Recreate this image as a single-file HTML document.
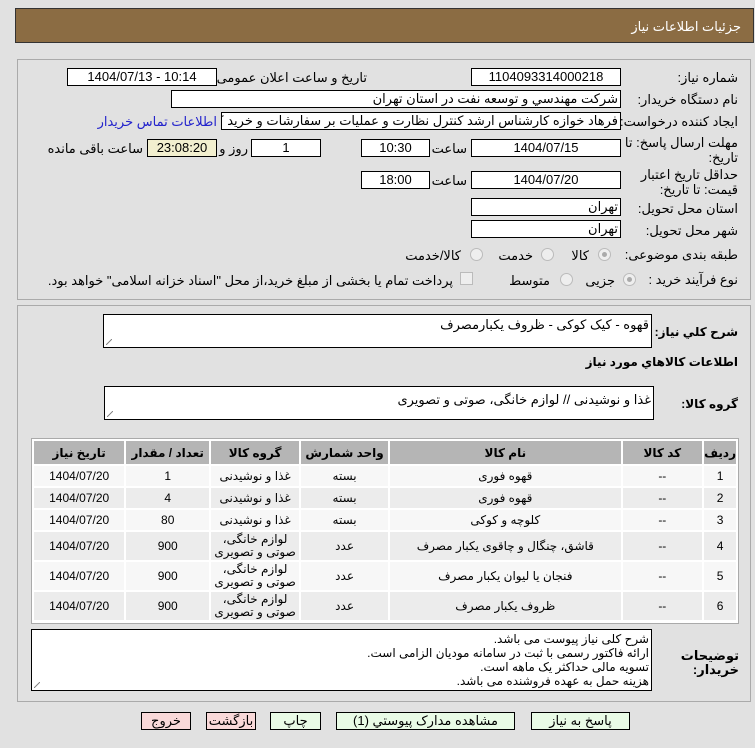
<!DOCTYPE html>
<html><head><meta charset="utf-8">
<style>
*{box-sizing:border-box;margin:0;padding:0}
body{width:755px;height:748px;background:#e1e1e1;font-family:"Liberation Sans","DejaVu Sans",sans-serif;font-size:12px;color:#000;position:relative;overflow:hidden}
.a{position:absolute;white-space:nowrap}
.box{position:absolute;background:#fff;border:1px solid #000;height:18px;line-height:16px;text-align:center;font-size:13px;white-space:nowrap}
.r{direction:rtl;text-align:right}
.lbl{position:absolute;right:17px;direction:rtl;font-size:13px;white-space:nowrap}
.panel{position:absolute;border:1px solid #aaa;background:#e1e1e1}
.radio{position:absolute;width:13px;height:13px;border-radius:50%;border:1px solid #bbb;background:#eee}
.radio.on:after{content:"";position:absolute;left:3px;top:3px;width:5px;height:5px;border-radius:50%;background:#aaa}
table{border-collapse:separate;border-spacing:2px;position:absolute;left:32px;top:439px;width:706px;background:#fff}
td,th{text-align:center;font-size:12px;direction:rtl}
th{background:#b5b5b5;height:23px;font-weight:bold}
tr.o td{background:#f7f7f7}
tr.e td{background:#ececec}
.btn{position:absolute;top:712px;height:18px;border:1px solid #000;text-align:center;line-height:16px;font-size:13px;background:#e9fbe6}
.btn.p{background:#f9d9d9}
.ta{position:absolute;background:#fff;border:1px solid #000;direction:rtl;text-align:right;padding:2px 2px;font-size:13px}
.ta:after{content:"";position:absolute;left:2px;bottom:2px;width:6px;height:6px;background:linear-gradient(135deg,transparent 45%,#888 45%,#888 55%,transparent 55%)}
</style></head><body>
<div class="a" style="left:15px;top:8px;width:739px;height:35px;background:#8b6c43;border:1px solid #333"></div>
<div class="a" style="right:14px;top:19px;color:#fff;font-size:13px;direction:rtl">جزئیات اطلاعات نیاز</div>

<div class="panel" style="left:17px;top:59px;width:734px;height:241px"></div>
<div class="lbl" style="top:70px">شماره نیاز:</div>
<div class="box" style="left:471px;top:68px;width:150px">1104093314000218</div>
<div class="a" style="right:388px;top:70px;font-size:13px;direction:rtl">تاریخ و ساعت اعلان عمومی:</div>
<div class="box" style="left:67px;top:68px;width:150px">1404/07/13 - 10:14</div>

<div class="lbl" style="top:92px">نام دستگاه خریدار:</div>
<div class="box r" style="left:171px;top:90px;width:450px;padding-right:2px">شرکت مهندسي و توسعه نفت در استان تهران</div>

<div class="lbl" style="top:114px">ایجاد کننده درخواست:</div>
<div class="box r" style="left:221px;top:112px;width:400px;padding-right:2px;overflow:hidden">فرهاد خوازه کارشناس ارشد کنترل نظارت و عملیات بر سفارشات و خرید کالا شرکت</div>
<div class="a" style="right:538px;top:114px;color:#2222cc;font-size:13px;direction:rtl">اطلاعات تماس خریدار</div>

<div class="lbl" style="top:135px">مهلت ارسال پاسخ: تا</div>
<div class="lbl" style="top:150px">تاریخ:</div>
<div class="box" style="left:471px;top:139px;width:150px">1404/07/15</div>
<div class="a" style="right:288px;top:141px;font-size:13px;direction:rtl">ساعت</div>
<div class="box" style="left:361px;top:139px;width:69px">10:30</div>
<div class="box" style="left:251px;top:139px;width:70px">1</div>
<div class="a" style="right:507px;top:141px;font-size:13px;direction:rtl">روز و</div>
<div class="box" style="left:147px;top:139px;width:70px;background:#f2efcf">23:08:20</div>
<div class="a" style="right:612px;top:141px;font-size:13px;direction:rtl">ساعت باقی مانده</div>

<div class="lbl" style="top:167px">حداقل تاریخ اعتبار</div>
<div class="lbl" style="top:182px">قیمت: تا تاریخ:</div>
<div class="box" style="left:471px;top:171px;width:150px">1404/07/20</div>
<div class="a" style="right:288px;top:173px;font-size:13px;direction:rtl">ساعت</div>
<div class="box" style="left:361px;top:171px;width:69px">18:00</div>

<div class="lbl" style="top:201px">استان محل تحویل:</div>
<div class="box r" style="left:471px;top:198px;width:150px;padding-right:2px">تهران</div>
<div class="lbl" style="top:223px">شهر محل تحویل:</div>
<div class="box r" style="left:471px;top:220px;width:150px;padding-right:2px">تهران</div>

<div class="lbl" style="top:247px">طبقه بندی موضوعی:</div>
<div class="radio on" style="left:598px;top:248px"></div>
<div class="a" style="right:166px;top:248px;font-size:13px;direction:rtl">کالا</div>
<div class="radio" style="left:541px;top:248px"></div>
<div class="a" style="right:222px;top:248px;font-size:13px;direction:rtl">خدمت</div>
<div class="radio" style="left:470px;top:248px"></div>
<div class="a" style="right:294px;top:248px;font-size:13px;direction:rtl">کالا/خدمت</div>

<div class="lbl" style="top:272px">نوع فرآیند خرید :</div>
<div class="radio on" style="left:623px;top:273px"></div>
<div class="a" style="right:140px;top:273px;font-size:13px;direction:rtl">جزیی</div>
<div class="radio" style="left:560px;top:273px"></div>
<div class="a" style="right:205px;top:273px;font-size:13px;direction:rtl">متوسط</div>
<div class="a" style="left:460px;top:272px;width:13px;height:13px;border:1px solid #bbb;background:#eee"></div>
<div class="a" style="right:302px;top:273px;font-size:13px;direction:rtl">پرداخت تمام یا بخشی از مبلغ خرید،از محل "اسناد خزانه اسلامی" خواهد بود.</div>

<div class="panel" style="left:17px;top:305px;width:734px;height:397px"></div>
<div class="lbl" style="top:325px;font-weight:bold;font-size:12px">شرح کلي نیاز:</div>
<div class="ta" style="left:103px;top:314px;width:549px;height:34px">قهوه - کیک کوکی - ظروف یکبارمصرف</div>
<div class="lbl" style="top:355px;font-weight:bold;font-size:12px">اطلاعات کالاهاي مورد نیاز</div>
<div class="lbl" style="top:397px;font-weight:bold;font-size:12px">گروه کالا:</div>
<div class="ta" style="left:104px;top:386px;width:550px;height:34px;padding-top:5px">غذا و نوشیدنی // لوازم خانگی، صوتی و تصویری</div>

<div class="a" style="left:31px;top:438px;width:708px;height:186px;border:1px solid #aaa;background:#fff"></div>
<table>
<tr><th style="width:91px">تاریخ نیاز</th><th style="width:84px">تعداد / مقدار</th><th style="width:89px">گروه کالا</th><th style="width:88px">واحد شمارش</th><th style="width:235px">نام کالا</th><th style="width:81px">کد کالا</th><th>ردیف</th></tr>
<tr class="o" style="height:20px"><td>1404/07/20</td><td>1</td><td>غذا و نوشیدنی</td><td>بسته</td><td>قهوه فوری</td><td>--</td><td>1</td></tr>
<tr class="e" style="height:20px"><td>1404/07/20</td><td>4</td><td>غذا و نوشیدنی</td><td>بسته</td><td>قهوه فوری</td><td>--</td><td>2</td></tr>
<tr class="o" style="height:20px"><td>1404/07/20</td><td>80</td><td>غذا و نوشیدنی</td><td>بسته</td><td>کلوچه و کوکی</td><td>--</td><td>3</td></tr>
<tr class="e" style="height:28px"><td>1404/07/20</td><td>900</td><td style="line-height:13px">لوازم خانگی،<br>صوتی و تصویری</td><td>عدد</td><td>قاشق، چنگال و چاقوی یکبار مصرف</td><td>--</td><td>4</td></tr>
<tr class="o" style="height:28px"><td>1404/07/20</td><td>900</td><td style="line-height:13px">لوازم خانگی،<br>صوتی و تصویری</td><td>عدد</td><td>فنجان یا لیوان یکبار مصرف</td><td>--</td><td>5</td></tr>
<tr class="e" style="height:28px"><td>1404/07/20</td><td>900</td><td style="line-height:13px">لوازم خانگی،<br>صوتی و تصویری</td><td>عدد</td><td>ظروف یکبار مصرف</td><td>--</td><td>6</td></tr>
</table>

<div class="lbl" style="top:648px;font-weight:bold;right:16px">توضیحات</div>
<div class="lbl" style="top:662px;font-weight:bold;right:16px">خریدار:</div>
<div class="ta" style="left:31px;top:629px;width:621px;height:62px;line-height:14px;padding-top:2px;font-size:12px">شرح کلی نیاز پیوست می باشد.<br>ارائه فاکتور رسمی با ثبت در سامانه مودیان الزامی است.<br>تسویه مالی حداکثر یک ماهه است.<br>هزینه حمل به عهده فروشنده می باشد.</div>

<div class="btn" style="left:531px;width:99px">پاسخ به نیاز</div>
<div class="btn" style="left:336px;width:179px">مشاهده مدارک پیوستي (1)</div>
<div class="btn" style="left:270px;width:51px">چاپ</div>
<div class="btn p" style="left:206px;width:50px">بازگشت</div>
<div class="btn p" style="left:141px;width:50px">خروج</div>
</body></html>
